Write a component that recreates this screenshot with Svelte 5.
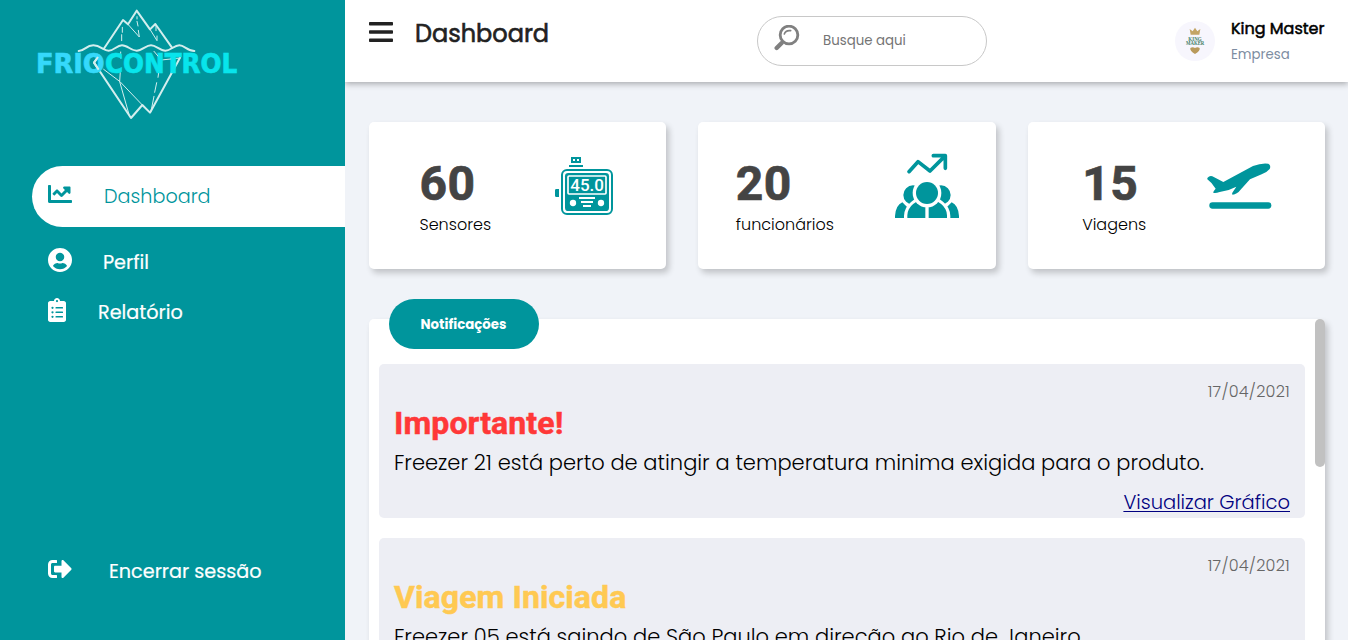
<script>
  const notices = [
    { kind: 'alert', date: '17/04/2021', title: 'Importante!', text: 'Freezer 21 está perto de atingir a temperatura minima exigida para o produto.', link: 'Visualizar Gráfico' },
    { kind: 'trip', date: '17/04/2021', title: 'Viagem Iniciada', text: 'Freezer 05 está saindo de São Paulo em direção ao Rio de Janeiro' }
  ];
</script>

<div class="app">
  <aside>
    <svg class="logo" viewBox="0 0 720 390" width="240" height="130">
      <g fill="none" stroke="#d3eeee" stroke-linejoin="round" stroke-linecap="round">
        <path stroke-width="6" d="M251 147L309 60L324 73L350 32L390 88L406 72L456 143" />
        <path stroke-width="6" d="M176 153C194 153 198 136 220 136S250 152 266 152S290 136 306 136S334 152 350 152S378 136 393 136S420 152 436 152S462 136 478 136S502 153 523 153" />
        <path stroke-width="6" d="M234 171L222 188L333 354L367 315L390 338L480 173" />
        <path stroke-width="3" d="M307 82V97M305 104V122M351 50V57M351 64L354 78M324 73L358 111L355 91M390 88L411 122V108M408 76V92M251 208L300 245L367 315M302 156V174M301 213L299 245L327 343M410 248L404 277M402 289L393 334M416 218L414 232M402 154L424 180L480 174" />
      </g>
      <g stroke-width="2">
        <text class="word" x="48" y="218" textLength="206" lengthAdjust="spacingAndGlyphs" fill="#35d9fb" stroke="#35d9fb">FRIO</text>
        <text class="word" x="255" y="218" textLength="397" lengthAdjust="spacingAndGlyphs" fill="#08e5ec" stroke="#08e5ec">CONTROL</text>
      </g>
      <path fill="none" stroke="#d3eeee" stroke-width="6" stroke-linejoin="round" d="M234 171L222 188L236 209" />
    </svg>

    <nav>
      <a class="item active" href="#dashboard">
        <svg viewBox="0 0 512 512" width="24" height="24"><path d="M496 384H64V80c0-8.840-7.160-16-16-16H16C7.160 64 0 71.160 0 80v336c0 17.670 14.330 32 32 32h464c8.840 0 16-7.160 16-16v-32c0-8.840-7.160-16-16-16zM464 96H345.940c-21.380 0-32.090 25.850-16.970 40.970l32.400 32.400L288 242.750l-73.370-73.370c-12.500-12.500-32.760-12.500-45.250 0l-68.690 68.690c-6.250 6.250-6.250 16.380 0 22.630l22.620 22.620c6.250 6.250 16.380 6.250 22.630 0L192 237.250l73.370 73.370c12.500 12.500 32.760 12.500 45.250 0l96-96 32.400 32.400c15.120 15.120 40.970 4.410 40.970-16.970V112c.01-8.840-7.150-16-15.990-16z" /></svg>
        <span>Dashboard</span>
      </a>
      <a class="item profile" href="#perfil">
        <svg viewBox="0 8 496 496" width="24" height="24"><path d="M248 8C111 8 0 119 0 256s111 248 248 248 248-111 248-248S385 8 248 8zm0 96c48.600 0 88 39.400 88 88s-39.400 88-88 88-88-39.400-88-88 39.400-88 88-88zm0 344c-58.700 0-111.300-26.600-146.500-68.200 18.800-35.400 55.600-59.800 98.500-59.800 2.400 0 4.800.4 7.100 1.100 13 4.200 26.600 6.900 40.900 6.900 14.300 0 28-2.700 40.900-6.900 2.300-.7 4.700-1.100 7.100-1.100 42.900 0 79.700 24.400 98.500 59.800C359.300 421.400 306.700 448 248 448z" /></svg>
        <span>Perfil</span>
      </a>
      <a class="item" href="#relatorio">
        <svg viewBox="0 0 384 512" width="18" height="24"><path fill-rule="evenodd" d="M336 64h-80c0-35.300-28.700-64-64-64s-64 28.700-64 64H48C21.500 64 0 85.500 0 112v352c0 26.500 21.500 48 48 48h288c26.500 0 48-21.500 48-48V112c0-26.500-21.500-48-48-48zM96 424a24 24 0 1 1 0-48 24 24 0 0 1 0 48zm0-96a24 24 0 1 1 0-48 24 24 0 0 1 0 48zm0-96a24 24 0 1 1 0-48 24 24 0 0 1 0 48zm96-192a24 24 0 1 1 0 48 24 24 0 0 1 0-48zM168 384h144q8 0 8 8v16q0 8-8 8H168q-8 0-8-8v-16q0-8 8-8zm0-96h144q8 0 8 8v16q0 8-8 8H168q-8 0-8-8v-16q0-8 8-8zm0-96h144q8 0 8 8v16q0 8-8 8H168q-8 0-8-8v-16q0-8 8-8z" /></svg>
        <span>Relatório</span>
      </a>
    </nav>

    <a class="item logout" href="#sair">
      <svg viewBox="0 0 512 512" width="24" height="24"><path d="M497 273L329 441c-15 15-41 4.500-41-17v-96H152c-13.300 0-24-10.700-24-24v-96c0-13.300 10.700-24 24-24h136V88c0-21.400 25.900-32 41-17l168 168c9.300 9.400 9.300 24.600 0 34zM192 436v-40c0-6.600-5.400-12-12-12H96c-17.700 0-32-14.300-32-32V160c0-17.700 14.300-32 32-32h84c6.600 0 12-5.400 12-12V76c0-6.600-5.400-12-12-12H96c-53 0-96 43-96 96v192c0 53 43 96 96 96h84c6.600 0 12-5.400 12-12z" /></svg>
      <span>Encerrar sessão</span>
    </a>
  </aside>

  <div class="content">
    <header>
      <svg class="bars" viewBox="0 0 24 20" width="24" height="20"><path d="M.8 0h22.400q.8 0 .8.800v1.900q0 .8-.8.800H.8q-.8 0-.8-.8V.8Q0 0 .8 0zm0 8.300h22.400q.8 0 .8.800v1.900q0 .8-.8.800H.8q-.8 0-.8-.8V9.100q0-.8.8-.8zm0 8.300h22.400q.8 0 .8.800v1.900q0 .7-.8.700H.8q-.8 0-.8-.7v-1.900q0-.8.8-.8z" /></svg>
      <h1>Dashboard</h1>
      <div class="search">
        <svg viewBox="0 0 78 78" width="26" height="26" fill="none" stroke="#808080" stroke-linecap="round"><circle cx="45" cy="30" r="26.500" stroke-width="8.500" /><path stroke-width="5" d="M31 27Q35 15 50 17" /><path stroke-width="13" d="M23 54L8 69" /></svg>
        <span>Busque aqui</span>
      </div>
      <div class="user">
        <svg viewBox="0 0 120 120" width="40" height="40">
          <circle cx="60" cy="60" r="60" fill="#f7f6fd" />
          <path fill="#c3a566" d="M44 24L53 31L60 20L67 31L76 24L73 41H47z" />
          <path fill="#b99a5b" d="M46 81Q53 77 60 81Q67 77 74 81Q76 90 60 99Q44 90 46 81z" />
          <g class="badge"><text x="40" y="61" textLength="40" lengthAdjust="spacingAndGlyphs">KING</text><text x="33" y="73" textLength="55" lengthAdjust="spacingAndGlyphs">MAKER</text></g>
        </svg>
        <div><strong>King Master</strong><small>Empresa</small></div>
      </div>
    </header>

    <main>
      <section class="cards">
        <article class="card sensors">
          <div><b>60</b><span>Sensores</span></div>
          <svg viewBox="585 120 216 216" width="72" height="72">
            <path fill-rule="evenodd" d="M633 141h30v18h-30zM639 147v6h6v-6zM651 147v6h6v-6zM627 165h42v6h-42zM589 237h8v24h-8q-4 0-4-4v-16q0-4 4-4z" />
            <rect x="606" y="180" width="150" height="132" rx="15" fill="none" stroke="#00959c" stroke-width="6" />
            <rect x="615" y="189" width="132" height="114" rx="10" />
            <rect x="624" y="198" width="114" height="54" rx="3" fill="none" stroke="#fff" stroke-width="5" />
            <g fill="#fff"><circle cx="639" cy="279" r="9.500" /><circle cx="723" cy="279" r="9.500" /><path d="M657 261h48v6h-48zM663 273h36v6h-36zM669 285h24v6h-24z" /></g>
            <text class="reading" x="631" y="243" textLength="101" lengthAdjust="spacingAndGlyphs">45.0</text>
          </svg>
        </article>
        <article class="card staff">
          <div><b>20</b><span>funcionários</span></div>
          <svg viewBox="615 120 216 216" width="72" height="72">
            <path d="M615 324V318Q617 286 637 277L660 300V324zM807 324V318Q805 286 785 277L762 300V324z" />
            <g stroke="#fff" stroke-width="6"><circle cx="669" cy="255" r="32" /><circle cx="753" cy="255" r="32" /></g>
            <path stroke="#fff" stroke-width="20" d="M652 332V318A59.500 49 0 0 1 771 318V332z" />
            <path d="M652 324V316A59.500 48 0 0 1 771 316V324z" />
            <circle cx="711" cy="249" r="43" fill="#fff" /><circle cx="711" cy="249" r="33" />
            <path fill="#fff" d="M706 290h10v35h-10zM610 324h202v12H610z" />
            <path fill="none" stroke="#00959c" stroke-width="11" stroke-linecap="round" stroke-linejoin="round" d="M657 185L684 155L720 183L764 139M730 137H766V175" />
          </svg>
        </article>
        <article class="card trips">
          <div><b>15</b><span>Viagens</span></div>
          <svg viewBox="560 120 216 216" width="72" height="72">
            <path d="M561 204Q568 196 576 199L609 216L698 168Q724 158 744 161Q753 166 748 177Q740 187 724 193L689 208L660 240Q650 253 637 254Q633 252 638 245L648 230Q626 242 598 246Q584 251 579 248Q577 246 586 236Q576 219 561 208z" />
            <rect x="567" y="277" width="186" height="19" rx="9.500" />
          </svg>
        </article>
      </section>

      <section class="panel">
        <h2>Notificações</h2>
        <div class="thumb"></div>
        {#each notices as n}
          <article class="notice {n.kind}">
            <time>{n.date}</time>
            <h3>{n.title}</h3>
            <p>{n.text}</p>
            {#if n.link}<a href="#grafico">{n.link}</a>{/if}
          </article>
        {/each}
      </section>
    </main>
  </div>
</div>

<style>
  :global(body) { margin: 0; overflow: hidden; }
  * { box-sizing: border-box; }
  .app { display: flex; width: 100%; height: 640px; overflow: hidden; background: #f0f3f8; font-family: Poppins, Inter, sans-serif; color: #000; }
  svg { display: block; flex: none; }
  h1, h2, h3, p { margin: 0; }

  aside { display: flex; flex-direction: column; width: 345px; flex: none; background: #00959c; color: #fff; }
  .logo { margin-left: 20px; }
  .word { font: bold 80px "DejaVu Sans", sans-serif; }
  nav { display: flex; flex-direction: column; padding-top: 36px; }
  .item { display: flex; align-items: center; gap: 32px; height: 50px; padding: 2px 0 0 48px; color: #fff; fill: currentColor; font-size: 19.2px; line-height: 30px; text-decoration: none; -webkit-text-stroke: .2px; }
  .item svg { position: relative; top: -3px; }
  .active { height: 61px; margin: 0 0 10px 32px; padding: 0 0 0 16px; background: #fff; border-radius: 31px 0 0 31px; color: #00959c; font-weight: 300; -webkit-text-stroke: 0; }
  .profile { gap: 31px; }
  .logout { gap: 37px; margin: auto 0 44px; }

  .content { display: flex; flex-direction: column; flex: 1; min-width: 0; }
  header { display: flex; align-items: flex-start; height: 82px; flex: none; padding: 0 23px 0 24px; background: #fff; box-shadow: 0 2px 6px rgba(0, 0, 0, .3); clip-path: inset(0 0 -12px 0); }
  .bars { margin-top: 22px; fill: #222; }
  h1 { margin: 15px 0 0 22px; width: 342px; color: #222; font-size: 24px; line-height: 38px; font-weight: 400; -webkit-text-stroke: .6px; }
  .search { display: flex; gap: 23px; width: 230px; height: 50px; margin-top: 16px; padding: 8px 0 0 16px; border: 1px solid #c8c8c8; border-radius: 25px; color: #757575; font-size: 13.33px; line-height: 31px; }
  .user { display: flex; gap: 16px; margin: 16px 0 0 auto; }
  .user > svg { margin-top: 5px; }
  .user div { display: flex; flex-direction: column; width: 94px; padding-top: 1px; white-space: nowrap; }
  strong { font-size: 16px; line-height: 24px; font-weight: 400; -webkit-text-stroke: .5px; }
  small { margin-top: 4px; color: #7d8da1; font-size: 13.33px; line-height: 20px; }
  .badge { fill: #3f8068; font: bold 17px "Liberation Serif", serif; }

  main { display: flex; flex-direction: column; flex: 1; padding: 40px 23px 0 24px; }
  .cards { display: grid; grid-template-columns: repeat(3, 1fr); gap: 32px; height: 147px; }
  .card { display: grid; align-items: start; background: #fff; border-radius: 5px; box-shadow: 3px 4px 6px rgba(0, 0, 0, .2); }
  .card > svg { margin-top: 28px; fill: #00959c; }
  .sensors { grid-template-columns: 135.5px 72px; padding-left: 50.5px; }
  .staff { grid-template-columns: 159.5px 72px; padding-left: 37.5px; }
  .trips { grid-template-columns: 124.5px 72px; padding-left: 54.5px; }
  .card div { display: flex; flex-direction: column; padding-top: 34px; font-size: 16px; font-weight: 300; line-height: 26px; }
  b { color: #444; font: 700 48px/56px Roboto, sans-serif; letter-spacing: .5px; -webkit-text-stroke: .7px; }
  .reading { fill: #fff; font: 500 48px Roboto, sans-serif; }

  .panel { position: relative; display: flex; flex-direction: column; gap: 20px; height: 500px; margin-top: 50px; padding: 45px 20px 0 10px; background: #fff; border-radius: 5px; box-shadow: 3px 4px 6px rgba(0, 0, 0, .2); }
  h2 { position: absolute; left: 20px; top: -20px; width: 150px; height: 50px; padding-right: 1px; border-radius: 25px; background: #00959c; color: #fff; font-size: 13.33px; line-height: 51px; font-weight: 700; text-align: center; }
  .thumb { position: absolute; right: 0; top: 0; width: 10px; height: 148px; border-radius: 5px; background: #c1c1c1; }
  .notice { display: flex; flex-direction: column; flex: none; height: 154px; padding: 16px 15px 0; border-radius: 5px; background: #edeef4; font-weight: 300; }
  time { align-self: flex-end; color: #666; font-size: 16px; line-height: 24px; letter-spacing: .25px; }
  h3 { margin-top: -1px; font: 700 32px/40px Roboto, sans-serif; letter-spacing: .1px; -webkit-text-stroke: .5px; }
  .alert h3 { color: #ff3838; }
  .trip h3 { color: #ffc952; }
  p { font-size: 21px; line-height: 40px; white-space: nowrap; }
  .notice a { align-self: flex-end; margin-top: 4px; color: #000080; font-size: 19.5px; line-height: 32px; text-underline-offset: 2px; text-decoration-thickness: 1px; }
</style>
